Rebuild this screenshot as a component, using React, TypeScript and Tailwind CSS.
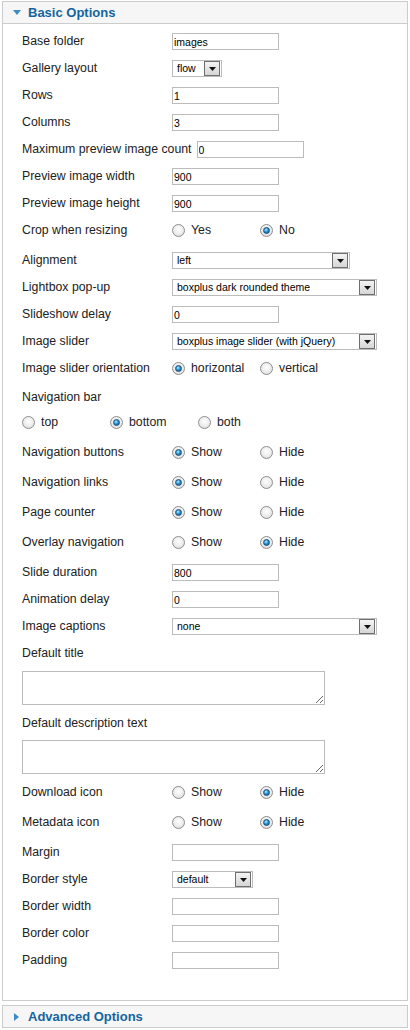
import React from "react";

function Radio({ checked }: { checked?: boolean }) {
  return (
    <span className="flex h-[13px] w-[13px] shrink-0 items-center justify-center rounded-full border border-[#8d8d8d] bg-[radial-gradient(circle_at_50%_40%,#ffffff_0%,#ececec_55%,#d2d2d2_100%)]">
      {checked && (
        <span className="h-[7px] w-[7px] rounded-full border border-[#1b4c76] bg-[radial-gradient(circle_at_40%_35%,#b4ecff_0%,#2e96d6_45%,#0c4d82_100%)]" />
      )}
    </span>
  );
}

function TextInput({ value = "" }: { value?: string }) {
  return (
    <input
      readOnly
      defaultValue={value}
      className="h-[17px] w-[107px] border border-[#bcbcbc] bg-white px-[1px] text-[10.5px] text-black outline-none"
    />
  );
}

function Select({ value, width }: { value: string; width: string }) {
  return (
    <div className={`flex h-[17px] items-center border border-[#bcbcbc] bg-white ${width}`}>
      <span className="flex-1 truncate pl-[4px] text-[10.5px] text-black">{value}</span>
      <span className="mr-[1px] flex h-[15px] w-[16px] items-center justify-center border border-[#6f6f6f] bg-gradient-to-b from-[#f4f4f4] to-[#d6d6d6]">
        <svg width="7" height="4" viewBox="0 0 7 4">
          <path d="M0 0h7L3.5 4z" fill="#111" />
        </svg>
      </span>
    </div>
  );
}

function Row({ label, children }: { label: string; children: React.ReactNode }) {
  return (
    <div className="flex h-[27px] items-center">
      <div className="min-w-[150px] pr-[5px]">{label}</div>
      {children}
    </div>
  );
}

function RadioRow({ label, options, checked }: { label?: string; options: string[]; checked: number }) {
  return (
    <div className="flex h-[30px] items-start">
      {label && <div className="flex h-[26px] min-w-[150px] items-center">{label}</div>}
      {options.map((o, i) => (
        <div key={o} className="flex h-[26px] w-[88px] items-center gap-[6px]">
          <Radio checked={i === checked} />
          <span>{o}</span>
        </div>
      ))}
    </div>
  );
}

function PanelHeader({ title, open }: { title: string; open?: boolean }) {
  return (
    <div className="flex h-[21px] items-center bg-[#f6f6f6] pl-[10px]">
      {open ? (
        <svg width="8" height="5" viewBox="0 0 8 5">
          <path d="M0 0h8L4 5z" fill="#3a8bc8" />
        </svg>
      ) : (
        <svg width="8" height="8" viewBox="0 0 8 8">
          <path d="M1 0v8l5-4z" fill="#3a8bc8" />
        </svg>
      )}
      <span className="ml-[7px] text-[13px] font-bold text-[#15649f]">{title}</span>
    </div>
  );
}

export default function App() {
  return (
    <div className="w-[410px] bg-white px-[2px] pt-[1px] font-['Liberation_Sans',Arial,sans-serif] text-[12.3px] text-[#222]">
      <div className="mb-[4px] border border-[#cccccc]">
        <div className="border-b border-[#cccccc]">
          <PanelHeader title="Basic Options" open />
        </div>
        <div className="pl-[19px] pt-[4px] pb-[26px]">
          <Row label="Base folder"><TextInput value="images" /></Row>
          <Row label="Gallery layout"><Select value="flow" width="w-[50px]" /></Row>
          <Row label="Rows"><TextInput value="1" /></Row>
          <Row label="Columns"><TextInput value="3" /></Row>
          <Row label="Maximum preview image count"><TextInput value="0" /></Row>
          <Row label="Preview image width"><TextInput value="900" /></Row>
          <Row label="Preview image height"><TextInput value="900" /></Row>
          <RadioRow label="Crop when resizing" options={["Yes", "No"]} checked={1} />
          <Row label="Alignment"><Select value="left" width="w-[178px]" /></Row>
          <Row label="Lightbox pop-up"><Select value="boxplus dark rounded theme" width="w-[205px]" /></Row>
          <Row label="Slideshow delay"><TextInput value="0" /></Row>
          <Row label="Image slider"><Select value="boxplus image slider (with jQuery)" width="w-[205px]" /></Row>
          <RadioRow label="Image slider orientation" options={["horizontal", "vertical"]} checked={0} />
          <div className="flex h-[24px] items-center">Navigation bar</div>
          <RadioRow options={["top", "bottom", "both"]} checked={1} />
          <RadioRow label="Navigation buttons" options={["Show", "Hide"]} checked={0} />
          <RadioRow label="Navigation links" options={["Show", "Hide"]} checked={0} />
          <RadioRow label="Page counter" options={["Show", "Hide"]} checked={0} />
          <RadioRow label="Overlay navigation" options={["Show", "Hide"]} checked={1} />
          <Row label="Slide duration"><TextInput value="800" /></Row>
          <Row label="Animation delay"><TextInput value="0" /></Row>
          <Row label="Image captions"><Select value="none" width="w-[205px]" /></Row>
          <div className="flex h-[26px] items-center">Default title</div>
          <textarea readOnly className="mt-[5px] block h-[34px] w-[303px] border border-[#bcbcbc] bg-white outline-none" />
          <div className="mt-[5px] flex h-[26px] items-center">Default description text</div>
          <textarea readOnly className="mt-[4px] block h-[34px] w-[303px] border border-[#bcbcbc] bg-white outline-none" />
          <div className="mt-[5px]">
            <RadioRow label="Download icon" options={["Show", "Hide"]} checked={1} />
          </div>
          <RadioRow label="Metadata icon" options={["Show", "Hide"]} checked={1} />
          <Row label="Margin"><TextInput /></Row>
          <Row label="Border style"><Select value="default" width="w-[81px]" /></Row>
          <Row label="Border width"><TextInput /></Row>
          <Row label="Border color"><TextInput /></Row>
          <Row label="Padding"><TextInput /></Row>
        </div>
      </div>
      <div className="border border-[#cccccc]">
        <PanelHeader title="Advanced Options" />
      </div>
    </div>
  );
}
